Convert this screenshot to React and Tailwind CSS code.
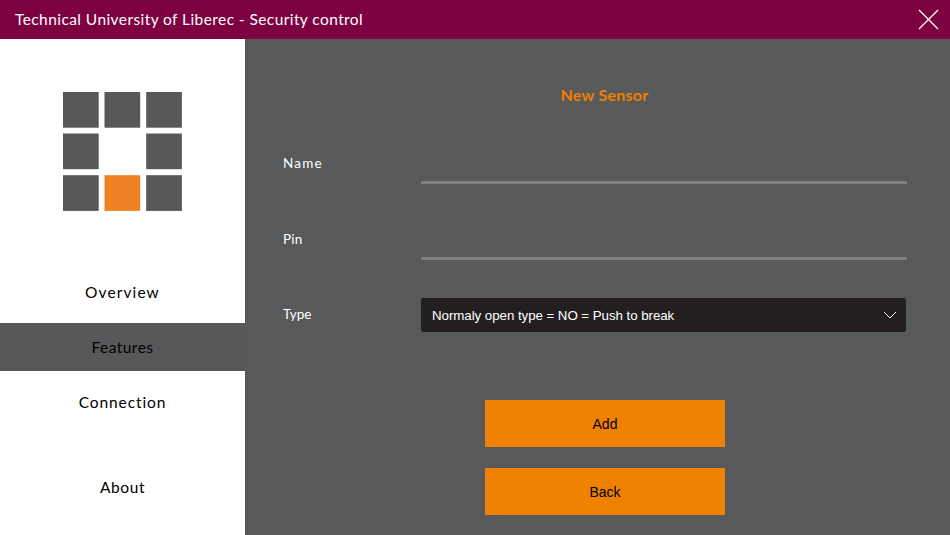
function Logo() {
  const cells = [
    [0, 0], [41.5, 0], [83.2, 0],
    [0, 41.5], [83.2, 41.5],
    [0, 83.2], [41.5, 83.2, '#f08223'], [83.2, 83.2],
  ];
  return (
    <svg width="119" height="119" viewBox="0 0 119 119" aria-hidden="true">
      {cells.map(([x, y, fill]) => (
        <rect key={`${x}-${y}`} x={x} y={y} width="35.7" height="35.7" fill={fill || '#58585a'} />
      ))}
    </svg>
  );
}

function NavItem({ className, text, children }) {
  return (
    <button className={`flex h-12 w-full shrink-0 items-center justify-center text-[15.5px] leading-5 text-black ${className || ''}`}>
      <span className={text}>{children}</span>
    </button>
  );
}

function Field({ label, className, spacing }) {
  return (
    <label className={`flex h-[34px] ${className}`}>
      <span className={`w-[138px] pt-1 text-[13.5px] leading-[18px] text-white ${spacing}`}>{label}</span>
      <input className="h-[34px] w-[486px] border-b-[3px] border-[#808080] bg-transparent outline-none" />
    </label>
  );
}

export default function App() {
  return (
    <div className="flex h-[535px] w-[950px] flex-col overflow-hidden bg-[#57595a] font-['Century_Gothic','Lato',sans-serif]">
      <header className="flex h-[39px] shrink-0 items-center justify-between bg-[#7d0040] pr-[11px] pl-[15px] text-white">
        <h1 className="pb-0.5 text-[15.5px] leading-5 tracking-[0.42px]">Technical University of Liberec - Security control</h1>
        <button aria-label="Close">
          <svg width="21" height="21" viewBox="0 0 21 21" fill="none" stroke="white" strokeWidth="1.3">
            <path d="M1 1L20 20M20 1L1 20" />
          </svg>
        </button>
      </header>
      <div className="flex flex-1">
        <aside className="flex w-[245px] flex-col bg-white">
          <div className="flex h-[229px] shrink-0 justify-center pt-[53px]">
            <Logo />
          </div>
          <NavItem text="tracking-[1.1px]">Overview</NavItem>
          <div className="h-[7px] shrink-0" />
          <NavItem className="bg-[#58585a]" text="tracking-[0.45px]">Features</NavItem>
          <div className="h-[7px] shrink-0" />
          <NavItem text="tracking-[0.9px]">Connection</NavItem>
          <div className="h-[37px] shrink-0" />
          <NavItem text="tracking-[0.6px]">About</NavItem>
        </aside>
        <main className="flex flex-1 flex-col bg-[#57595a] pl-[38px]">
          <h2 className="mt-[46px] w-[643px] text-center text-base leading-5 font-bold tracking-[0.25px] text-[#f08000]">New Sensor</h2>
          <Field label="Name" className="mt-[45px]" spacing="tracking-[1.2px]" />
          <Field label="Pin" className="mt-[42px]" spacing="tracking-[0.2px]" />
          <div className="mt-[38px] flex h-[34px]">
            <span className="w-[138px] pt-[7px] text-[13.5px] leading-[18px] text-white">Type</span>
            <button className="flex w-[485px] items-center justify-between rounded-[2px] bg-[#231f20] pr-[9px] pl-[11px] font-['Liberation_Sans',sans-serif] text-[13.33px] text-white">
              <span className="pt-0.5 tracking-[-0.06px]">Normaly open type = NO = Push to break</span>
              <svg width="14" height="8" viewBox="0 0 14 8" fill="none" stroke="white">
                <path d="M1 1L7 7L13 1" />
              </svg>
            </button>
          </div>
          <div className="mt-[68px] ml-[202px] flex w-[240px] flex-col gap-[21px] font-['Liberation_Sans',sans-serif] text-[14px] text-black">
            <button className="h-[47px] bg-[#f08000] pt-0.5">Add</button>
            <button className="h-[47px] bg-[#f08000] pt-0.5">Back</button>
          </div>
        </main>
      </div>
    </div>
  );
}
